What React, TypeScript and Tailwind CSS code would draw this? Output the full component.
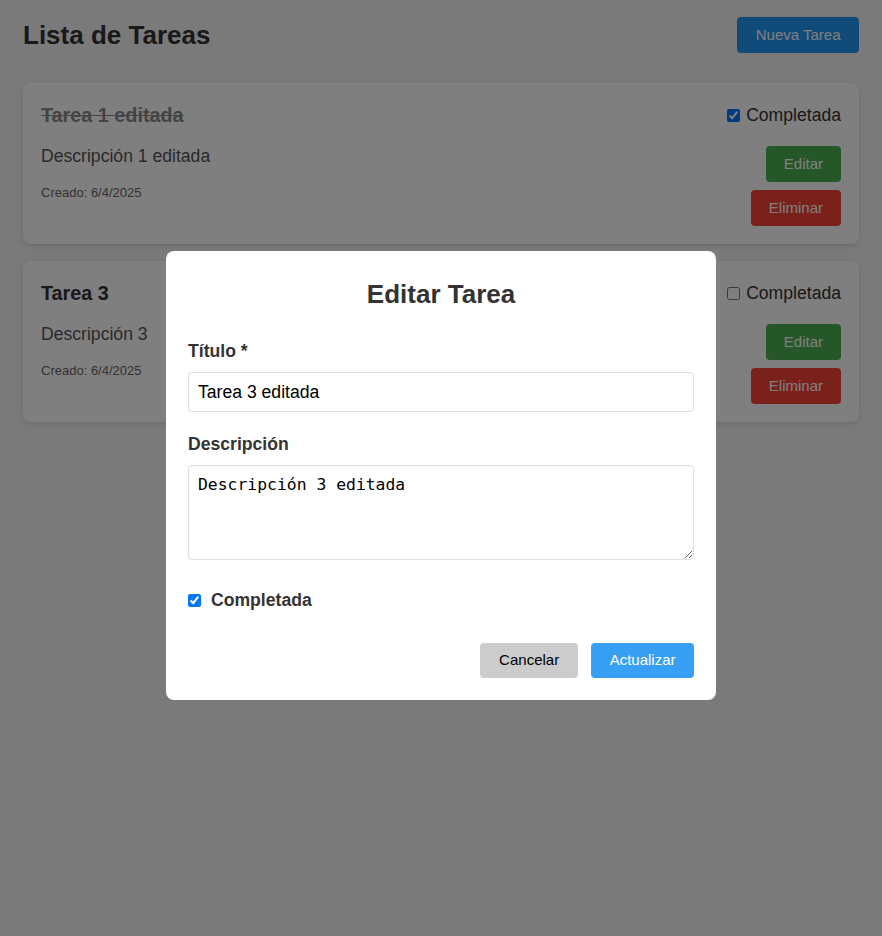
import { useState } from 'react';

interface Task {
  id: number;
  title: string;
  description: string;
  created: string;
  done: boolean;
}

const tasks: Task[] = [
  { id: 1, title: 'Tarea 1 editada', description: 'Descripción 1 editada', created: '6/4/2025', done: true },
  { id: 3, title: 'Tarea 3', description: 'Descripción 3', created: '6/4/2025', done: false },
];

function TaskCard({ task }: { task: Task }) {
  return (
    <div className="bg-white rounded-lg shadow-[0_2px_6px_rgba(0,0,0,0.12)] px-[18px] pt-[21px] pb-[18px]">
      <div className="flex items-center justify-between h-[23px]">
        <h3
          className={
            task.done
              ? 'text-[19.8px] font-bold text-[#888] line-through'
              : 'text-[19.8px] font-bold text-[#333]'
          }
        >
          {task.title}
        </h3>
        <label className="flex items-center gap-[6px] text-[17.6px] text-[#333] -mt-px">
          <input type="checkbox" defaultChecked={task.done} className="w-[13px] h-[13px] m-0" />
          Completada
        </label>
      </div>
      <div className="flex justify-between mt-[19px]">
        <div className="flex flex-col">
          <p className="text-[17.6px] text-[#555] leading-[20px]">{task.description}</p>
          <p className="text-[13px] text-[#666] mt-[17px]">Creado: {task.created}</p>
        </div>
        <div className="flex flex-col items-end gap-2">
          <button className="h-9 px-[18px] rounded bg-[#4caf50] text-white text-[15px]">Editar</button>
          <button className="h-9 px-[18px] rounded bg-[#f44336] text-white text-[15px]">Eliminar</button>
        </div>
      </div>
    </div>
  );
}

export default function App() {
  const [title, setTitle] = useState('Tarea 3 editada');
  const [desc, setDesc] = useState('Descripción 3 editada');
  const [done, setDone] = useState(true);

  return (
    <div className="min-h-[936px] bg-[#f5f5f5] font-['Liberation_Sans',Arial,sans-serif] text-[#333]">
      <div className="px-[23px] pt-[17px]">
        <header className="flex items-center justify-between h-9">
          <h1 className="text-[26px] font-bold text-[#333]">Lista de Tareas</h1>
          <button className="h-9 px-[18.5px] rounded bg-[#2196f3] text-white text-[15px]">Nueva Tarea</button>
        </header>
        <div className="mt-[30px] flex flex-col gap-[17px]">
          {tasks.map((t) => (
            <TaskCard key={t.id} task={t} />
          ))}
        </div>
      </div>

      <div className="fixed inset-0 bg-black/50 flex justify-center items-start pt-[251px]">
        <div className="w-[550px] bg-white rounded-lg px-[22px] pt-[28px] pb-[22px]">
          <h2 className="text-[26px] font-bold text-[#333] text-center leading-[30px]">Editar Tarea</h2>
          <label className="block mt-[32px] text-[17.6px] font-bold text-[#333] leading-[20px]">Título *</label>
          <input
            value={title}
            onChange={(e) => setTitle(e.target.value)}
            className="mt-[11px] w-full h-10 px-[9px] border border-[#ddd] rounded text-[17.6px] text-black outline-none"
          />
          <label className="block mt-[22px] text-[17.6px] font-bold text-[#333] leading-[20px]">Descripción</label>
          <textarea
            value={desc}
            onChange={(e) => setDesc(e.target.value)}
            className="mt-[11px] block w-full h-[95px] px-[9px] py-[7px] border border-[#ddd] rounded font-['DejaVu_Sans_Mono',monospace] text-[16.4px] text-black outline-none"
          />
          <label className="mt-[30px] flex items-center gap-[10px] h-5 text-[17.6px] font-bold text-[#333]">
            <input
              type="checkbox"
              checked={done}
              onChange={(e) => setDone(e.target.checked)}
              className="w-[13px] h-[13px] m-0"
            />
            Completada
          </label>
          <div className="mt-[33px] flex justify-end gap-[13px]">
            <button className="h-[35px] px-[19px] rounded bg-[#ccc] text-black text-[15px]">Cancelar</button>
            <button className="h-[35px] px-[18.5px] rounded bg-[#38a0f4] text-white text-[15px]">Actualizar</button>
          </div>
        </div>
      </div>
    </div>
  );
}
